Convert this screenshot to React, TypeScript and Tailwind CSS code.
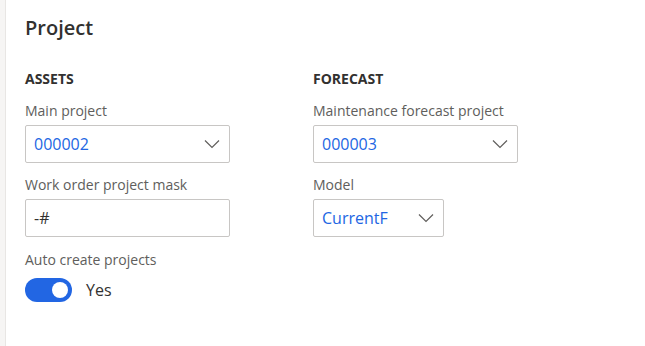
import React from 'react';

const font = { fontFamily: '"Segoe UI", "Open Sans", sans-serif' };

const Chevron: React.FC = () => (
  <svg width="16" height="10" viewBox="0 0 16 10" className="shrink-0">
    <path d="M1 1.5 L8 8.5 L15 1.5" fill="none" stroke="#605e5c" strokeWidth="1.2" />
  </svg>
);

const Label: React.FC<{ children: React.ReactNode }> = ({ children }) => (
  <div className="text-[14px] leading-[19px] text-[#605e5c] mb-[5px]">{children}</div>
);

const Select: React.FC<{ value: string; width: string }> = ({ value, width }) => (
  <div className={`${width} h-[38px] border border-[#c8c6c4] rounded-[2px] flex items-center justify-between pl-[8px] pr-[9px]`}>
    <span className="text-[16px] text-[#2266e3]">{value}</span>
    <Chevron />
  </div>
);

const App: React.FC = () => {
  return (
    <div className="w-[645px] h-[346px] bg-white flex" style={font}>
      <div className="w-[6px] bg-[#f6f5f4] border-r border-[#e8e6e4]" />
      <div className="flex-1 pl-[19px] pt-[14px]">
        <h1 className="text-[20px] leading-[28px] font-semibold text-[#323130]">Project</h1>

        <div className="flex mt-[27px]">
          <div className="w-[288px]">
            <div className="text-[14px] leading-[19px] font-bold text-[#323130] mb-[13px]">ASSETS</div>
            <Label>Main project</Label>
            <Select value="000002" width="w-[205px]" />
            <div className="mt-[12px]">
              <Label>Work order project mask</Label>
              <div className="w-[205px] h-[38px] border border-[#c8c6c4] rounded-[2px] flex items-center pl-[8px]">
                <span className="text-[16px] text-[#323130]">-#</span>
              </div>
            </div>
            <div className="mt-[13px]">
              <Label>Auto create projects</Label>
              <div className="flex items-center gap-[14px] mt-[9px]">
                <div className="w-[47px] h-[24px] rounded-full bg-[#2266e3] flex items-center justify-end pr-[4px]">
                  <div className="w-[16px] h-[16px] rounded-full bg-white" />
                </div>
                <span className="text-[16px] text-[#323130]">Yes</span>
              </div>
            </div>
          </div>

          <div>
            <div className="text-[14px] leading-[19px] font-bold text-[#323130] mb-[13px]">FORECAST</div>
            <Label>Maintenance forecast project</Label>
            <Select value="000003" width="w-[205px]" />
            <div className="mt-[12px]">
              <Label>Model</Label>
              <Select value="CurrentF" width="w-[131px]" />
            </div>
          </div>
        </div>
      </div>
    </div>
  );
};

export default App;
